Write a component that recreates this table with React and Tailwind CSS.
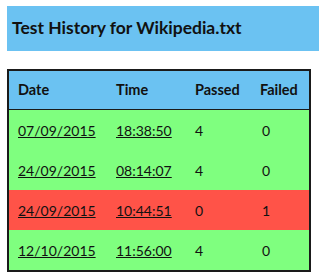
import React from "react";

const runs = [
  { date: "07/09/2015", time: "18:38:50", passed: 4, failed: 0 },
  { date: "24/09/2015", time: "08:14:07", passed: 4, failed: 0 },
  { date: "24/09/2015", time: "10:44:51", passed: 0, failed: 1 },
  { date: "12/10/2015", time: "11:56:00", passed: 4, failed: 0 },
];

const cols = "grid grid-cols-[98px_79px_65px_1fr]";

export default function App() {
  return (
    <div className="min-h-screen bg-white pt-[6px] pl-[7px] font-['Lato',sans-serif] text-[#111]">
      <div className="h-[45px] bg-[#6bc2f2] flex items-center pl-[5px]">
        <h1 className="text-[17.5px] font-bold">Test History for Wikipedia.txt</h1>
      </div>

      <div className="mt-[18px] w-[304px] border-2 border-[#1a1a1a]">
        <div className={`${cols} h-[39px] items-center bg-[#6bc2f2] border-b border-[#1a1a1a] text-[14.5px] font-bold`}>
          <span className="pl-[9px]">Date</span>
          <span className="pl-[9px]">Time</span>
          <span className="pl-[9px]">Passed</span>
          <span className="pl-[9px]">Failed</span>
        </div>
        {runs.map((r, i) => (
          <div
            key={i}
            className={`${cols} h-[40px] items-center text-[14px] ${r.failed > 0 ? "bg-[#ff5348]" : "bg-[#7fff7f]"}`}
          >
            <a href="#" className="pl-[9px] underline">{r.date}</a>
            <a href="#" className="pl-[9px] underline">{r.time}</a>
            <span className="pl-[9px]">{r.passed}</span>
            <span className="pl-[11px]">{r.failed}</span>
          </div>
        ))}
      </div>
    </div>
  );
}
